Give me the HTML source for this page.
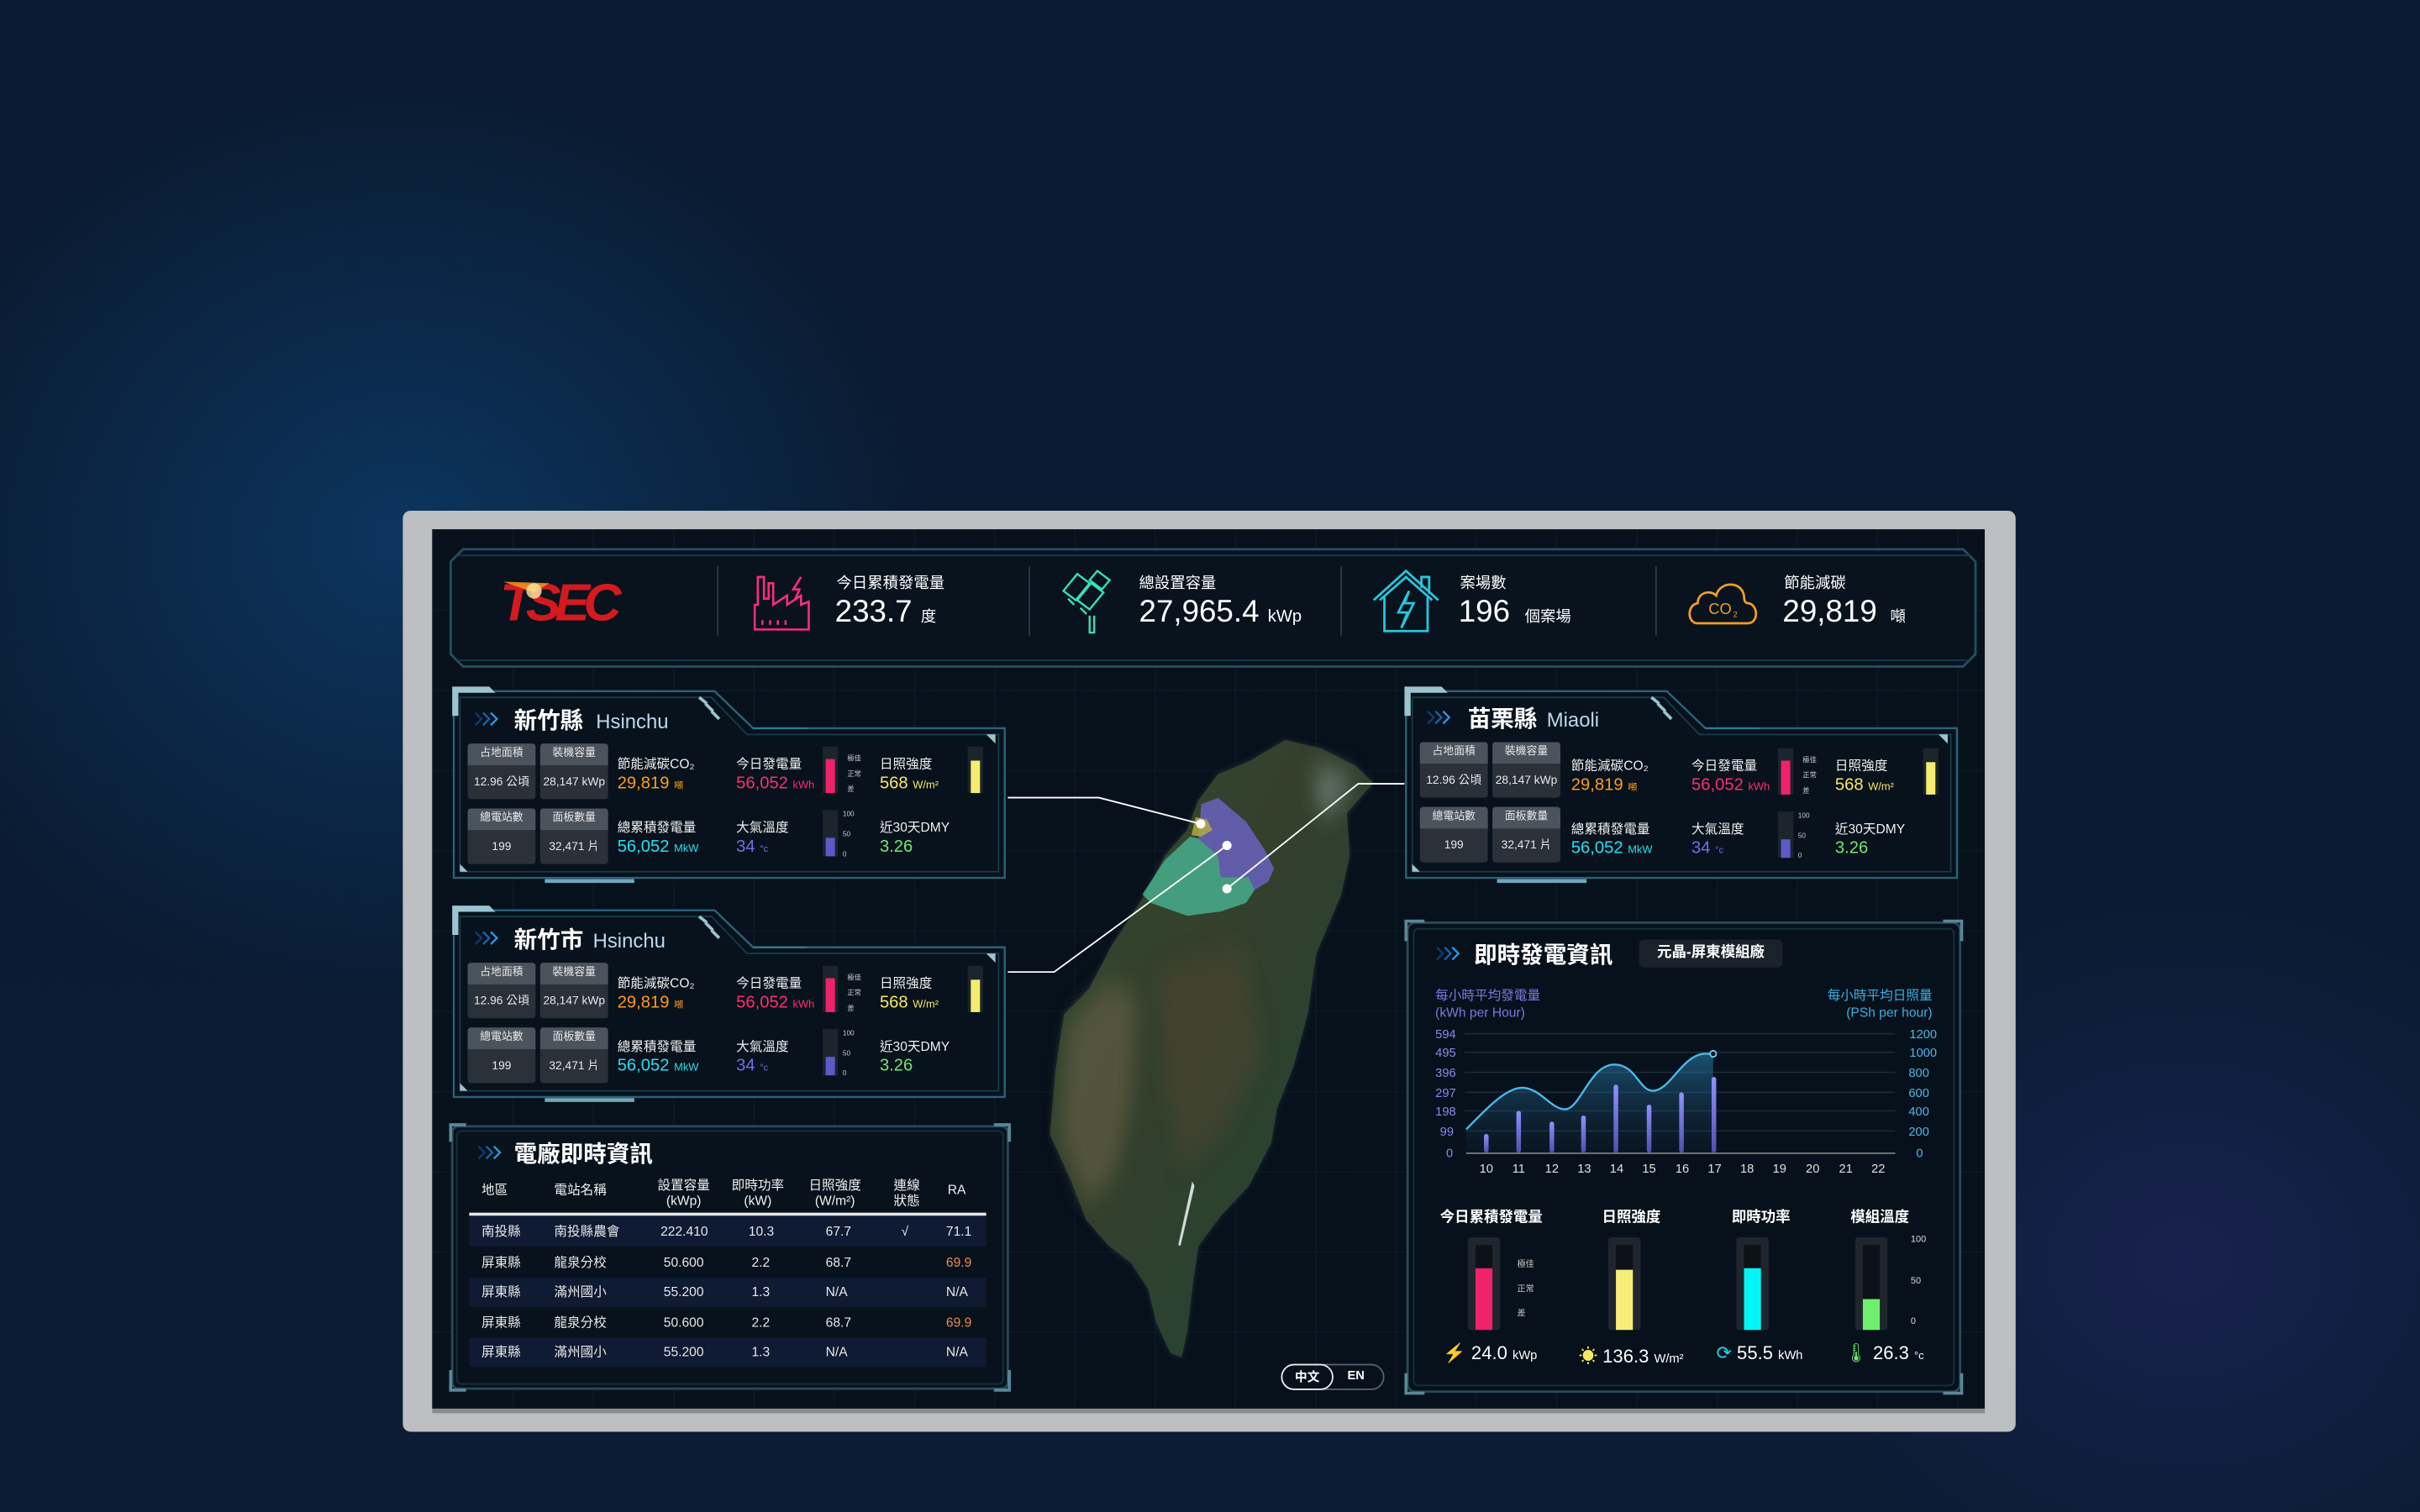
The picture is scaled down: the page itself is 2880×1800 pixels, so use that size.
<!DOCTYPE html>
<html><head><meta charset="utf-8">
<style>
*{margin:0;padding:0;box-sizing:border-box}
html,body{width:2880px;height:1800px;overflow:hidden;background:#0a1a2f}
body{font-family:"Liberation Sans","Noto Sans CJK TC",sans-serif;color:#fff}
#bg{position:absolute;left:0;top:0;width:2880px;height:1800px;
background:radial-gradient(ellipse 900px 800px at 480px 640px,rgba(12,62,110,.75),rgba(10,26,47,0) 70%),
radial-gradient(ellipse 700px 600px at 2600px 1500px,rgba(40,40,110,.45),rgba(10,26,47,0) 70%),
linear-gradient(#0a1a30,#0b1c34);}
#w{position:absolute;left:0;top:0;width:1568px;height:980px;transform:scale(1.836735);transform-origin:0 0}
.a{position:absolute;white-space:nowrap}
.frame{position:absolute;left:261px;top:331px;width:1045px;height:597px;background:#bdbfc2;border-radius:5px}
.screen{position:absolute;left:280px;top:343px;width:1006px;height:570px;background:#07111c;overflow:hidden;
background-image:linear-gradient(rgba(30,50,70,.18) 1px,transparent 1px),linear-gradient(90deg,rgba(30,50,70,.18) 1px,transparent 1px);background-size:52px 52px;background-color:#07111c}
.strip{position:absolute;left:280px;top:913px;width:1006px;height:3px;background:#8a8b8d}
.lbl{font-size:8.5px;color:#f0f0f0}
.sb{position:absolute;width:44px;background:#2a3139;border-radius:2px;font-size:7.5px;text-align:center;color:#e8e8e8}
.sb .h{background:#4b535d;height:14px;line-height:14px;border-radius:2px 2px 0 0;font-size:7px}
.sb .v{height:22px;line-height:22px}
.bar{position:absolute;width:10px;height:30px;background:#1c242c}
.bar i{position:absolute;left:2px;right:2px;bottom:0;display:block}
.tiny{position:absolute;font-size:4.5px;color:#ccc}
th,td{font-weight:normal}
</style></head><body>
<div id="bg"></div>
<svg width="0" height="0" style="position:absolute"><defs>
<g id="chv" fill="none" stroke-width="1.3"><path d="M1 1 L5 5 L1 9" stroke="#0f3a6a"/><path d="M6 1 L10 5 L6 9" stroke="#1b62a8"/><path d="M11 1 L15 5 L11 9" stroke="#2f95e0"/></g>
<g id="pf">
<path d="M1 26 L1 4 L170 4 L195 28 L358 28 L358 125 L1 125 Z" fill="#08121c" stroke="#2a6278" stroke-width="1.3"/>
<path d="M5 30 L5 8 L168 8 L191 32 L354 32 L354 121 L5 121 Z" fill="none" stroke="#163a4a" stroke-width="1"/>
<path d="M0 1 L24 1 L28 5 L4 5 L4 20 L0 20 Z" fill="#9bc4d0"/>
<path d="M160 8 L165 12 M164 12 L169 17 M168 17 L173 22" stroke="#9bc4d0" stroke-width="2"/>
<path d="M60 127 L118 127" stroke="#6fa8b8" stroke-width="2.5"/>
<path d="M195 28 L230 28" stroke="#2a7f9e" stroke-width="1"/>
<path d="M352 32 L352 38 L346 32 Z" fill="#9bc4d0"/>
<path d="M5 116 L5 121 L10 121 Z" fill="#9bc4d0"/>
</g></defs></svg>
<div id="w">
<div class="frame"></div>
<div class="screen"></div>
<div class="strip"></div>

<!-- header panel -->
<svg class="a" style="left:280px;top:343px" width="1006" height="100" viewBox="280 343 1006 100">
<path d="M300 356 L1272 356 L1280 364 L1280 424 L1272 432 L300 432 L292 424 L292 364 Z" fill="#08131e" stroke="#23505f" stroke-width="1.5"/>
<path d="M296 360 L1276 360 M296 428 L1276 428" stroke="#17394a" stroke-width="1"/>
<line x1="465" y1="367" x2="465" y2="412" stroke="#2a3a48"/>
<line x1="667" y1="367" x2="667" y2="412" stroke="#2a3a48"/>
<line x1="869" y1="367" x2="869" y2="412" stroke="#2a3a48"/>
<line x1="1073" y1="367" x2="1073" y2="412" stroke="#2a3a48"/>
</svg>
<div class="a" style="left:324px;top:372px;font-size:34px;font-weight:bold;font-style:italic;color:#d41a1e;letter-spacing:-4px;line-height:38px">TSEC</div>
<svg class="a" style="left:326px;top:374px" width="40" height="24"><polygon points="0,3 30,4 20,10" fill="#f09020" opacity=".9"/><circle cx="20" cy="9" r="5" fill="#ffe9a0" opacity=".8"/></svg>
<!-- factory -->
<svg class="a" style="left:486px;top:372px" width="42" height="38" viewBox="0 0 42 38" fill="none" stroke="#ff2d78" stroke-width="1.4"><path d="M3 36 L3 20 L5 20 L5 2 L9 2 L9 16 L12 16 L12 6 L15 6 L15 20 L24 14 L24 20 L33 14 L33 20 L38 18 L38 36 Z"/><path d="M8 30 v3 M13 30 v3 M18 30 v3 M23 30 v3"/><path d="M33 2 L28 10 L32 10 L29 17" /></svg>
<div class="a" style="left:542px;top:369px;font-size:10px">今日累積發電量</div>
<div class="a" style="left:541px;top:386px;font-size:20px">233.7 <span style="font-size:10px">度</span></div>
<!-- solar -->
<svg class="a" style="left:686px;top:369px" width="36" height="42" viewBox="0 0 36 42" fill="none" stroke="#37e0b8" stroke-width="1.3"><path d="M3 14 L12 3 L20 9 L11 20 Z M12 20 L21 9 L29 15 L20 26 Z M20 7 L25 1 L33 7 L28 13 Z"/><path d="M6 19 L10 23 M14 25 L18 29 M20 30 L20 41 L23 41 L23 30"/></svg>
<div class="a" style="left:738px;top:369px;font-size:10px">總設置容量</div>
<div class="a" style="left:738px;top:386px;font-size:20px">27,965.4 <span style="font-size:11px">kWp</span></div>
<!-- house -->
<svg class="a" style="left:888px;top:369px" width="46" height="44" viewBox="0 0 46 44" fill="none" stroke="#25c8e0" stroke-width="1.5"><path d="M2 20 L23 1 L44 20 M6 20 L23 5 L40 20 M9 18 L9 40 L37 40 L37 18 M33 12 L33 5 L38 5 L38 16"/><path d="M25 14 L18 28 L24 28 L20 38 L28 22 L22 22 Z"/></svg>
<div class="a" style="left:946px;top:369px;font-size:10px">案場數</div>
<div class="a" style="left:945px;top:386px;font-size:20px">196 <span style="font-size:10px;margin-left:4px">個案場</span></div>
<!-- cloud -->
<svg class="a" style="left:1092px;top:374px" width="50" height="32" viewBox="0 0 50 32" fill="none" stroke="#f0a020" stroke-width="1.5"><path d="M8 30 C1 30 1 18 8 17 C8 10 16 8 20 12 C22 3 36 2 38 12 C38 16 39 17 41 17 C47 18 48 30 40 30 Z"/><text x="15" y="24" font-size="10" fill="#f0a020" stroke="none" font-family="Liberation Sans">CO</text><text x="31" y="26" font-size="5" fill="#f0a020" stroke="none" font-family="Liberation Sans">2</text></svg>
<div class="a" style="left:1156px;top:369px;font-size:10px">節能減碳</div>
<div class="a" style="left:1155px;top:386px;font-size:20px">29,819 <span style="font-size:10px;margin-left:3px">噸</span></div>

<!-- map -->
<svg class="a" style="left:664.2px;top:462.8px" width="250.4" height="435.6" viewBox="0 0 1380 1568" preserveAspectRatio="none">
<defs>
<linearGradient id="tg" x1="0" y1="0" x2="1" y2="1"><stop offset="0" stop-color="#2f4a30"/><stop offset=".4" stop-color="#34402c"/><stop offset=".7" stop-color="#2a4230"/><stop offset="1" stop-color="#264530"/></linearGradient>
<filter id="gl"><feGaussianBlur stdDeviation="8"/></filter>
<filter id="bl"><feGaussianBlur stdDeviation="30"/></filter>
</defs>
<path d="M930 60 L1060 80 L1180 120 L1245 160 L1150 230 L1160 330 L1130 420 L1040 560 L1010 700 L960 820 L900 920 L880 1000 L800 1100 L700 1170 L620 1240 L600 1330 L580 1440 L560 1500 L520 1490 L470 1420 L440 1340 L380 1280 L300 1240 L220 1180 L160 1080 L90 980 L110 830 L140 700 L230 640 L310 540 L420 430 L500 330 L580 270 L620 200 L690 140 L800 110 Z" fill="#5a7a80" opacity=".3" filter="url(#gl)"/>
<path d="M930 60 L1060 80 L1180 120 L1245 160 L1150 230 L1160 330 L1130 420 L1040 560 L1010 700 L960 820 L900 920 L880 1000 L800 1100 L700 1170 L620 1240 L600 1330 L580 1440 L560 1500 L520 1490 L470 1420 L440 1340 L380 1280 L300 1240 L220 1180 L160 1080 L90 980 L110 830 L140 700 L230 640 L310 540 L420 430 L500 330 L580 270 L620 200 L690 140 L800 110 Z" fill="url(#tg)"/>
<g filter="url(#bl)">
<path d="M160 720 L300 620 L400 660 L380 900 L320 1080 L220 1140 L130 990 L140 820 Z" fill="#7a6a50" opacity=".45"/>
<path d="M480 600 L780 540 L850 800 L700 980 L560 1060 L500 880 Z" fill="#5a4630" opacity=".4"/>
<path d="M1030 120 L1170 140 L1120 220 L1050 240 Z" fill="#a8b8b8" opacity=".4"/>
</g>
<path d="M598 1090 L606 1100 L556 1240 L548 1238 Z" fill="#e8eef0" opacity=".9"/>
<path d="M630 210 L690 195 L790 250 L860 320 L890 360 L870 390 L820 410 L800 380 L700 380 L690 330 L620 290 Z" fill="#6a62c0" opacity=".85"/>
<path d="M590 285 L620 290 L690 330 L700 380 L800 380 L820 410 L790 440 L700 460 L580 470 L450 440 L420 420 L500 340 Z" fill="#4cc0a0" opacity=".72"/>
<path d="M610 240 L650 245 L670 270 L630 285 L595 282 Z" fill="#b8b040" opacity=".8"/>
</svg>
<svg class="a" style="left:640px;top:460px" width="280" height="200" viewBox="640 460 280 200" fill="none" stroke="#fff" stroke-width="1">
<polyline points="653,517 712,517 778,534"/>
<polyline points="653,630 683,630 795,548"/>
<polyline points="910,508 880,508 795,576"/>
<circle cx="778" cy="534" r="2.5" fill="#fff"/><circle cx="795" cy="548" r="2.5" fill="#fff"/><circle cx="795" cy="576" r="2.5" fill="#fff"/>
</svg>

<!-- Hsinchu County -->
<div class="a" style="left:293px;top:444px;width:360px;height:130px">
<svg class="a" style="left:0;top:0;overflow:visible" width="360" height="130"><use href="#pf"/></svg>
<svg class="a" style="left:14px;top:17px" width="17" height="11"><use href="#chv"/></svg>
<div class="a" style="left:40px;top:12px;font-size:15px;font-weight:bold">新竹縣 <span style="font-weight:normal;font-size:13px;color:#bcd8f2;margin-left:4px">Hsinchu</span></div>
<div class="sb" style="left:10px;top:38px"><div class="h">占地面積</div><div class="v">12.96 公頃</div></div>
<div class="sb" style="left:57px;top:38px"><div class="h">裝機容量</div><div class="v">28,147 kWp</div></div>
<div class="sb" style="left:10px;top:80px"><div class="h">總電站數</div><div class="v">199</div></div>
<div class="sb" style="left:57px;top:80px"><div class="h">面板數量</div><div class="v">32,471 片</div></div>
<div class="a lbl" style="left:107px;top:45px">節能減碳CO₂</div>
<div class="a" style="left:107px;top:58px;font-size:11px;color:#ff9c1a">29,819 <span style="font-size:6px">噸</span></div>
<div class="a lbl" style="left:184px;top:45px">今日發電量</div>
<div class="a" style="left:184px;top:58px;font-size:11px;color:#ff2d70">56,052 <span style="font-size:7px">kWh</span></div>
<div class="bar" style="left:240px;top:40px"><i style="height:22px;background:#f0226a"></i></div>
<div class="tiny" style="left:256px;top:45px">極佳</div><div class="tiny" style="left:256px;top:55px">正常</div><div class="tiny" style="left:256px;top:65px">差</div>
<div class="a lbl" style="left:277px;top:45px">日照強度</div>
<div class="a" style="left:277px;top:58px;font-size:11px;color:#f8e860">568 <span style="font-size:7px">W/m²</span></div>
<div class="bar" style="left:334px;top:40px"><i style="height:21px;background:#f5ec70"></i></div>
<div class="a lbl" style="left:107px;top:86px">總累積發電量</div>
<div class="a" style="left:107px;top:99px;font-size:11px;color:#22e0f0">56,052 <span style="font-size:7px">MkW</span></div>
<div class="a lbl" style="left:184px;top:86px">大氣溫度</div>
<div class="a" style="left:184px;top:99px;font-size:11px;color:#7070e8">34 <span style="font-size:6px">°c</span></div>
<div class="bar" style="left:240px;top:81px"><i style="height:12px;background:#5a5ac8"></i></div>
<div class="tiny" style="left:253px;top:81px">100</div><div class="tiny" style="left:253px;top:94px">50</div><div class="tiny" style="left:253px;top:107px">0</div>
<div class="a lbl" style="left:277px;top:86px">近30天DMY</div>
<div class="a" style="left:277px;top:99px;font-size:11px;color:#70e870">3.26</div>
</div>

<!-- Hsinchu City -->
<div class="a" style="left:293px;top:586px;width:360px;height:130px">
<svg class="a" style="left:0;top:0;overflow:visible" width="360" height="130"><use href="#pf"/></svg>
<svg class="a" style="left:14px;top:17px" width="17" height="11"><use href="#chv"/></svg>
<div class="a" style="left:40px;top:12px;font-size:15px;font-weight:bold">新竹市 <span style="font-weight:normal;font-size:13px;color:#bcd8f2;margin-left:2px">Hsinchu</span></div>
<div class="sb" style="left:10px;top:38px"><div class="h">占地面積</div><div class="v">12.96 公頃</div></div>
<div class="sb" style="left:57px;top:38px"><div class="h">裝機容量</div><div class="v">28,147 kWp</div></div>
<div class="sb" style="left:10px;top:80px"><div class="h">總電站數</div><div class="v">199</div></div>
<div class="sb" style="left:57px;top:80px"><div class="h">面板數量</div><div class="v">32,471 片</div></div>
<div class="a lbl" style="left:107px;top:45px">節能減碳CO₂</div>
<div class="a" style="left:107px;top:58px;font-size:11px;color:#ff9c1a">29,819 <span style="font-size:6px">噸</span></div>
<div class="a lbl" style="left:184px;top:45px">今日發電量</div>
<div class="a" style="left:184px;top:58px;font-size:11px;color:#ff2d70">56,052 <span style="font-size:7px">kWh</span></div>
<div class="bar" style="left:240px;top:40px"><i style="height:22px;background:#f0226a"></i></div>
<div class="tiny" style="left:256px;top:45px">極佳</div><div class="tiny" style="left:256px;top:55px">正常</div><div class="tiny" style="left:256px;top:65px">差</div>
<div class="a lbl" style="left:277px;top:45px">日照強度</div>
<div class="a" style="left:277px;top:58px;font-size:11px;color:#f8e860">568 <span style="font-size:7px">W/m²</span></div>
<div class="bar" style="left:334px;top:40px"><i style="height:21px;background:#f5ec70"></i></div>
<div class="a lbl" style="left:107px;top:86px">總累積發電量</div>
<div class="a" style="left:107px;top:99px;font-size:11px;color:#22e0f0">56,052 <span style="font-size:7px">MkW</span></div>
<div class="a lbl" style="left:184px;top:86px">大氣溫度</div>
<div class="a" style="left:184px;top:99px;font-size:11px;color:#7070e8">34 <span style="font-size:6px">°c</span></div>
<div class="bar" style="left:240px;top:81px"><i style="height:12px;background:#5a5ac8"></i></div>
<div class="tiny" style="left:253px;top:81px">100</div><div class="tiny" style="left:253px;top:94px">50</div><div class="tiny" style="left:253px;top:107px">0</div>
<div class="a lbl" style="left:277px;top:86px">近30天DMY</div>
<div class="a" style="left:277px;top:99px;font-size:11px;color:#70e870">3.26</div>
</div>

<!-- Miaoli -->
<div class="a" style="left:910px;top:444px;width:360px;height:130px">
<svg class="a" style="left:0;top:0;overflow:visible" width="360" height="130"><use href="#pf"/></svg>
<svg class="a" style="left:14px;top:16px" width="17" height="11"><use href="#chv"/></svg>
<div class="a" style="left:41px;top:11px;font-size:15px;font-weight:bold">苗栗縣 <span style="font-weight:normal;font-size:13px;color:#bcd8f2;margin-left:2px">Miaoli</span></div>
<div class="sb" style="left:10px;top:37px"><div class="h">占地面積</div><div class="v">12.96 公頃</div></div>
<div class="sb" style="left:57px;top:37px"><div class="h">裝機容量</div><div class="v">28,147 kWp</div></div>
<div class="sb" style="left:10px;top:79px"><div class="h">總電站數</div><div class="v">199</div></div>
<div class="sb" style="left:57px;top:79px"><div class="h">面板數量</div><div class="v">32,471 片</div></div>
<div class="a lbl" style="left:108px;top:46px">節能減碳CO₂</div>
<div class="a" style="left:108px;top:59px;font-size:11px;color:#ff9c1a">29,819 <span style="font-size:6px">噸</span></div>
<div class="a lbl" style="left:186px;top:46px">今日發電量</div>
<div class="a" style="left:186px;top:59px;font-size:11px;color:#ff2d70">56,052 <span style="font-size:7px">kWh</span></div>
<div class="bar" style="left:242px;top:41px"><i style="height:22px;background:#f0226a"></i></div>
<div class="tiny" style="left:258px;top:46px">極佳</div><div class="tiny" style="left:258px;top:56px">正常</div><div class="tiny" style="left:258px;top:66px">差</div>
<div class="a lbl" style="left:279px;top:46px">日照強度</div>
<div class="a" style="left:279px;top:59px;font-size:11px;color:#f8e860">568 <span style="font-size:7px">W/m²</span></div>
<div class="bar" style="left:336px;top:41px"><i style="height:21px;background:#f5ec70"></i></div>
<div class="a lbl" style="left:108px;top:87px">總累積發電量</div>
<div class="a" style="left:108px;top:100px;font-size:11px;color:#22e0f0">56,052 <span style="font-size:7px">MkW</span></div>
<div class="a lbl" style="left:186px;top:87px">大氣溫度</div>
<div class="a" style="left:186px;top:100px;font-size:11px;color:#7070e8">34 <span style="font-size:6px">°c</span></div>
<div class="bar" style="left:242px;top:82px"><i style="height:12px;background:#5a5ac8"></i></div>
<div class="tiny" style="left:255px;top:82px">100</div><div class="tiny" style="left:255px;top:95px">50</div><div class="tiny" style="left:255px;top:108px">0</div>
<div class="a lbl" style="left:279px;top:87px">近30天DMY</div>
<div class="a" style="left:279px;top:100px;font-size:11px;color:#70e870">3.26</div>
</div>

<!-- table panel -->
<svg class="a" style="left:290px;top:726px" width="366" height="178" viewBox="0 0 366 178">
<rect x="3" y="4" width="360" height="170" rx="4" fill="#08121c" stroke="#2a4a5a" stroke-width="1.5"/>
<rect x="6" y="7" width="354" height="164" rx="3" fill="none" stroke="#17303d"/>
<path d="M2 14 L2 3 L12 3" stroke="#5a8898" stroke-width="2" fill="none"/><path d="M354 3 L364 3 L364 14" stroke="#5a8898" stroke-width="2" fill="none"/>
<path d="M2 162 L2 175 L12 175" stroke="#5a8898" stroke-width="2" fill="none"/><path d="M354 175 L364 175 L364 162" stroke="#5a8898" stroke-width="2" fill="none"/>
</svg>
<svg class="a" style="left:309px;top:742px" width="17" height="11"><use href="#chv"/></svg>
<div class="a" style="left:333px;top:737px;font-size:15px;font-weight:bold">電廠即時資訊</div>
<div class="a" style="left:304px;top:759px;width:335px;font-size:8.5px;line-height:10px;color:#f0f0f0">
<div class="a" style="left:8px;top:7px">地區</div>
<div class="a" style="left:55px;top:7px">電站名稱</div>
<div class="a" style="left:122px;top:4px;text-align:center">設置容量<br>(kWp)</div>
<div class="a" style="left:170px;top:4px;text-align:center">即時功率<br>(kW)</div>
<div class="a" style="left:220px;top:4px;text-align:center">日照強度<br>(W/m²)</div>
<div class="a" style="left:275px;top:4px;text-align:center">連線<br>狀態</div>
<div class="a" style="left:310px;top:7px">RA</div>
</div>
<div class="a" style="left:304px;top:786px;width:335px;height:2px;background:#e8e8e8"></div>
<div class="a" style="left:304px;top:788px;width:335px;font-size:8.5px;color:#e8e8e8">
<div style="height:20px;line-height:20px;background:#0f1a33;position:relative"><span class="a" style="left:8px">南投縣</span><span class="a" style="left:55px">南投縣農會</span><span class="a" style="left:124px">222.410</span><span class="a" style="left:181px">10.3</span><span class="a" style="left:231px">67.7</span><span class="a" style="left:280px">√</span><span class="a" style="left:309px">71.1</span></div>
<div style="height:20px;line-height:20px;position:relative"><span class="a" style="left:8px">屏東縣</span><span class="a" style="left:55px">龍泉分校</span><span class="a" style="left:126px">50.600</span><span class="a" style="left:183px">2.2</span><span class="a" style="left:231px">68.7</span><span class="a" style="left:309px;color:#f08a50">69.9</span></div>
<div style="height:19px;line-height:19px;background:#0f1a33;position:relative"><span class="a" style="left:8px">屏東縣</span><span class="a" style="left:55px">滿州國小</span><span class="a" style="left:126px">55.200</span><span class="a" style="left:183px">1.3</span><span class="a" style="left:231px">N/A</span><span class="a" style="left:309px">N/A</span></div>
<div style="height:20px;line-height:20px;position:relative"><span class="a" style="left:8px">屏東縣</span><span class="a" style="left:55px">龍泉分校</span><span class="a" style="left:126px">50.600</span><span class="a" style="left:183px">2.2</span><span class="a" style="left:231px">68.7</span><span class="a" style="left:309px;color:#f08a50">69.9</span></div>
<div style="height:19px;line-height:19px;background:#0f1a33;position:relative"><span class="a" style="left:8px">屏東縣</span><span class="a" style="left:55px">滿州國小</span><span class="a" style="left:126px">55.200</span><span class="a" style="left:183px">1.3</span><span class="a" style="left:231px">N/A</span><span class="a" style="left:309px">N/A</span></div>
</div>

<!-- lang toggle -->
<div class="a" style="left:830px;top:884px;width:67px;height:17px;border:1px solid #55606a;border-radius:9px"></div>
<div class="a" style="left:830px;top:884px;width:34px;height:17px;border:1px solid #e8e8e8;border-radius:9px;font-size:8px;line-height:15px;text-align:center;font-weight:bold">中文</div>
<div class="a" style="left:873px;top:887px;font-size:8px;font-weight:bold">EN</div>

<!-- realtime panel -->
<svg class="a" style="left:909px;top:594px" width="364" height="312" viewBox="0 0 364 312">
<rect x="3" y="4" width="358" height="304" rx="5" fill="#07111b" stroke="#2a4a5a" stroke-width="1.5"/>
<rect x="7" y="8" width="350" height="296" rx="3" fill="none" stroke="#17303d"/>
<path d="M2 16 L2 3 L14 3" stroke="#5a8898" stroke-width="2" fill="none"/><path d="M350 3 L362 3 L362 16" stroke="#5a8898" stroke-width="2" fill="none"/>
<path d="M2 296 L2 309 L14 309" stroke="#5a8898" stroke-width="2" fill="none"/><path d="M350 309 L362 309 L362 296" stroke="#5a8898" stroke-width="2" fill="none"/>
</svg>
<svg class="a" style="left:930px;top:613px" width="17" height="11"><use href="#chv"/></svg>
<div class="a" style="left:955px;top:608px;font-size:15px;font-weight:bold">即時發電資訊</div>
<div class="a" style="left:1062px;top:609px;width:93px;height:18px;background:#1a232c;border-radius:3px;font-size:9.5px;line-height:18px;text-align:center;font-weight:bold">元晶-屏東模組廠</div>
<div class="a" style="left:930px;top:640px;font-size:8.5px;line-height:10.5px;color:#7a78e0">每小時平均發電量<br>(kWh per Hour)</div>
<div class="a" style="left:1184px;top:640px;font-size:8.5px;line-height:10.5px;color:#3ab0e0;text-align:right">每小時平均日照量<br>(PSh per hour)</div>
<svg class="a" style="left:920px;top:660px" width="345" height="110" viewBox="920 660 345 110" font-family="Liberation Sans" font-size="8">
<defs><linearGradient id="ag" x1="0" y1="0" x2="0" y2="1"><stop offset="0" stop-color="#2a7aa8" stop-opacity=".6"/><stop offset="1" stop-color="#1a3a58" stop-opacity=".1"/></linearGradient>
<linearGradient id="bg2" x1="0" y1="0" x2="0" y2="1"><stop offset="0" stop-color="#9090ff"/><stop offset="1" stop-color="#5050b0"/></linearGradient></defs>
<g stroke="#1f2d3a" stroke-width=".8"><line x1="949" y1="670" x2="1228" y2="670"/><line x1="949" y1="682" x2="1228" y2="682"/><line x1="949" y1="695" x2="1228" y2="695"/><line x1="949" y1="708" x2="1228" y2="708"/><line x1="949" y1="720" x2="1228" y2="720"/><line x1="949" y1="733" x2="1228" y2="733"/></g>
<path d="M950 732 C960 722 975 705 986 705 C998 705 1005 719 1014 719 C1024 719 1030 690 1046 690 C1060 690 1062 707 1071 707 C1082 707 1090 684 1104 683 L1110 683 L1110 747 L950 747 Z" fill="url(#ag)"/>
<path d="M950 732 C960 722 975 705 986 705 C998 705 1005 719 1014 719 C1024 719 1030 690 1046 690 C1060 690 1062 707 1071 707 C1082 707 1090 684 1104 683 L1110 683" fill="none" stroke="#4ab8e8" stroke-width="1.3"/>
<circle cx="1110" cy="683" r="2" fill="#07111b" stroke="#6ad0f0"/>
<g fill="url(#bg2)"><rect x="961.5" y="735" width="3" height="12" rx="1.5"/><rect x="982.5" y="720" width="3" height="27" rx="1.5"/><rect x="1004" y="727" width="3" height="20" rx="1.5"/><rect x="1024.5" y="723" width="3" height="24" rx="1.5"/><rect x="1045.5" y="703" width="3" height="44" rx="1.5"/><rect x="1067" y="716" width="3" height="31" rx="1.5"/><rect x="1088" y="708" width="3" height="39" rx="1.5"/><rect x="1109" y="698" width="3" height="49" rx="1.5"/></g>
<line x1="950" y1="747.5" x2="1228" y2="747.5" stroke="#777" stroke-width="1"/>
<g fill="#8a88f0"><text x="930" y="673">594</text><text x="930" y="685">495</text><text x="930" y="698">396</text><text x="930" y="711">297</text><text x="930" y="723">198</text><text x="933" y="736">99</text><text x="937" y="750">0</text></g>
<g fill="#4ab8e8" text-anchor="end"><text x="1255" y="673">1200</text><text x="1255" y="685">1000</text><text x="1250" y="698">800</text><text x="1250" y="711">600</text><text x="1250" y="723">400</text><text x="1250" y="736">200</text><text x="1246" y="750">0</text></g>
<g fill="#e0e0e0" text-anchor="middle"><text x="963" y="760">10</text><text x="984" y="760">11</text><text x="1005.5" y="760">12</text><text x="1026.5" y="760">13</text><text x="1047.5" y="760">14</text><text x="1068.5" y="760">15</text><text x="1090" y="760">16</text><text x="1111" y="760">17</text><text x="1132" y="760">18</text><text x="1153" y="760">19</text><text x="1174.5" y="760">20</text><text x="1196" y="760">21</text><text x="1217" y="760">22</text></g>
</svg>
<div class="a" style="left:933px;top:781px;font-size:9.5px;font-weight:bold">今日累積發電量</div>
<div class="a" style="left:1038px;top:781px;font-size:9.5px;font-weight:bold">日照強度</div>
<div class="a" style="left:1122px;top:781px;font-size:9.5px;font-weight:bold">即時功率</div>
<div class="a" style="left:1199px;top:781px;font-size:9.5px;font-weight:bold">模組溫度</div>
<div class="a" style="left:951px;top:802px;width:21px;height:60px;background:#1f262e;border-radius:2px"><div class="a" style="left:5px;top:5px;width:11px;height:55px;background:#0c1218"></div><div class="a" style="left:5px;top:20px;width:11px;height:40px;background:#f0226a"></div></div>
<div class="a" style="left:983px;top:812px;font-size:5.5px;color:#ccc;line-height:16px">極佳<br>正常<br>差</div>
<div class="a" style="left:1042px;top:802px;width:21px;height:60px;background:#1f262e;border-radius:2px"><div class="a" style="left:5px;top:5px;width:11px;height:55px;background:#0c1218"></div><div class="a" style="left:5px;top:21px;width:11px;height:39px;background:#f6ee78"></div></div>
<div class="a" style="left:1125px;top:802px;width:21px;height:60px;background:#1f262e;border-radius:2px"><div class="a" style="left:5px;top:5px;width:11px;height:55px;background:#0c1218"></div><div class="a" style="left:5px;top:20px;width:11px;height:40px;background:#00f6f6"></div></div>
<div class="a" style="left:1202px;top:802px;width:21px;height:60px;background:#1f262e;border-radius:2px"><div class="a" style="left:5px;top:5px;width:11px;height:55px;background:#0c1218"></div><div class="a" style="left:5px;top:40px;width:11px;height:20px;background:#6ef06e"></div></div>
<div class="a" style="left:1238px;top:801px;font-size:6px;color:#ddd">100</div>
<div class="a" style="left:1238px;top:828px;font-size:6px;color:#ddd">50</div>
<div class="a" style="left:1238px;top:854px;font-size:6px;color:#ddd">0</div>
<div class="a" style="left:935px;top:870px;font-size:12px"><span style="color:#ff2d60;font-weight:bold">⚡</span> 24.0 <span style="font-size:8px">kWp</span></div>
<div class="a" style="left:1023px;top:870px;font-size:12px"><span style="color:#f8e860">☀</span> 136.3 <span style="font-size:8px">W/m²</span></div>
<div class="a" style="left:1112px;top:870px;font-size:12px"><span style="color:#22d8f0">⟳</span> 55.5 <span style="font-size:8px">kWh</span></div>
<div class="a" style="left:1195px;top:870px;font-size:12px"><span style="color:#70e870">🌡</span> 26.3 <span style="font-size:7px">°c</span></div>
</div>
</body></html>
